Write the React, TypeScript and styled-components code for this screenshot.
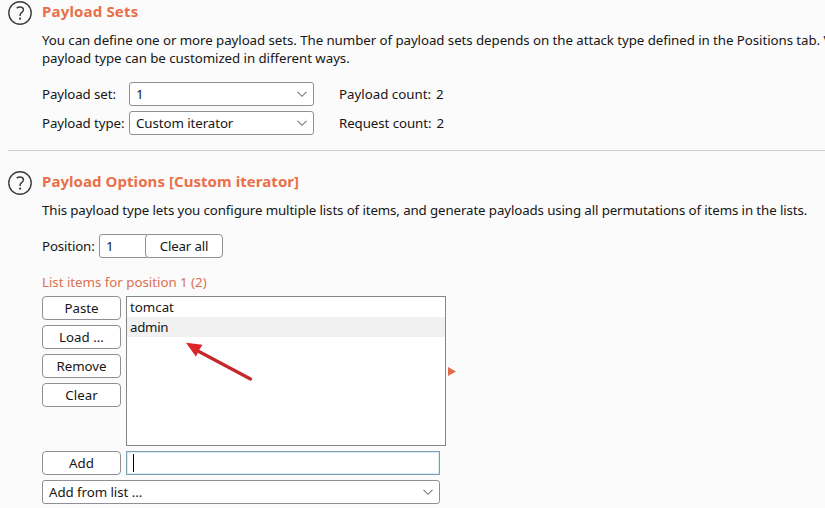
import React from "react";
import styled, { createGlobalStyle } from "styled-components";

const Global = createGlobalStyle`
  * { box-sizing: border-box; }
  html, body { margin: 0; padding: 0; background: #fbfbfb; overflow: hidden; }
  body { font-family: "Noto Sans", "Open Sans", sans-serif; font-size: 13.3px; color: #161616; }
`;

const Page = styled.main`
  width: 825px;
  height: 508px;
  overflow: hidden;
  background: #fbfbfb;
`;

const Section = styled.section<{ $top: number }>`
  display: grid;
  grid-template-columns: 24px 1fr;
  column-gap: 10px;
  padding: ${(p) => p.$top}px 0 0 8px;
`;

const Body = styled.div`
  display: flex;
  flex-direction: column;
  align-items: flex-start;
  min-width: 0;
`;

const Title = styled.h2<{ $spacing: number }>`
  margin: 0;
  height: 22px;
  line-height: 20px;
  font-size: 15px;
  font-weight: 700;
  letter-spacing: ${(p) => p.$spacing}px;
  color: #e8704a;
  white-space: nowrap;
`;

const Text = styled.span<{ $spacing?: number }>`
  letter-spacing: ${(p) => p.$spacing ?? 0}px;
  white-space: nowrap;
`;

const Paragraph = styled.p<{ $top: number }>`
  margin: ${(p) => p.$top}px 0 0;
  display: flex;
  flex-direction: column;
  line-height: 18px;
`;

const Form = styled.div`
  display: grid;
  grid-template-columns: 87px 185px auto;
  row-gap: 5px;
  margin-top: 15px;
  align-items: center;
`;

const Count = styled.div`
  padding-left: 25px;
  display: flex;
  gap: 5px;
`;

const Select = styled.div<{ $width: number }>`
  display: flex;
  align-items: center;
  justify-content: space-between;
  width: ${(p) => p.$width}px;
  height: 24px;
  padding: 0 5px 0 6px;
  border: 1px solid #8f8f96;
  border-radius: 3px;
  background: #fff;
`;

const Divider = styled.hr`
  margin: 15px 0 0 8px;
  border: 0;
  height: 1px;
  background: #cfcfcf;
`;

const PositionRow = styled.div`
  display: flex;
  align-items: center;
  margin-top: 15px;
`;

const PositionLabel = styled.div`
  width: 57px;
`;

const PositionValue = styled.div`
  display: flex;
  align-items: center;
  width: 50px;
  height: 24px;
  padding-left: 6px;
  border: 1px solid #8f8f96;
  border-radius: 3px;
  background: #fff;
`;

const Button = styled.button<{ $width: number; $overlap?: boolean }>`
  position: relative;
  display: flex;
  align-items: center;
  justify-content: center;
  width: ${(p) => p.$width}px;
  height: 24px;
  margin: 0 0 0 ${(p) => (p.$overlap ? -4 : 0)}px;
  padding: 0;
  border: 1px solid #8f8f96;
  border-radius: 4px;
  background: #fff;
  font: inherit;
  color: inherit;
`;

const ListCaption = styled.div`
  height: 20px;
  line-height: 20px;
  margin-top: 14px;
  color: #d9714f;
`;

const ListRow = styled.div`
  display: flex;
  margin-top: 4px;
`;

const ButtonColumn = styled.div`
  display: flex;
  flex-direction: column;
  gap: 5px;
  width: 84px;
`;

const ListBox = styled.div`
  width: 320px;
  height: 150px;
  border: 1px solid #86868a;
  background: #fff;
`;

const ListItem = styled.div<{ $selected?: boolean }>`
  height: 20px;
  line-height: 20px;
  padding-left: 3px;
  background: ${(p) => (p.$selected ? "#f1f1f1" : "transparent")};
`;

const Marker = styled.svg`
  display: block;
  margin: 71px 0 0 2px;
`;

const AddRow = styled.div`
  display: flex;
  gap: 5px;
  margin: 5px 0;
`;

const AddInput = styled.div`
  display: flex;
  align-items: center;
  width: 314px;
  height: 24px;
  padding-left: 6px;
  border: 1px solid #7f9fb0;
  box-shadow: inset 0 0 0 1px #dcebf1;
  background: #fff;
`;

const Caret = styled.span`
  width: 1px;
  height: 18px;
  background: #000;
`;

const Arrow = styled.svg`
  position: absolute;
  left: 180px;
  top: 336px;
`;

const HelpIcon = () => (
  <svg width="24" height="24" viewBox="0 0 24 24" fill="none" stroke="#3e3e3e">
    <circle cx="12" cy="12" r="11.2" strokeWidth="1.4" />
    <path d="M8.7 7.1C9.6 6.3 10.7 5.9 12 5.9C14.1 5.9 15.4 7 15.4 8.7C15.4 10.1 14.6 10.8 13.6 11.6C12.6 12.4 12.1 13 12.1 14.2V15" strokeWidth="1.5" />
    <circle cx="12.1" cy="17.7" r="1.1" fill="#3e3e3e" stroke="none" />
  </svg>
);

const Chevron = () => (
  <svg width="12" height="8" viewBox="0 0 12 8" fill="none" stroke="#77777b" strokeWidth="1.1">
    <path d="M1.5 1.9L6 6.3L10.5 1.9" />
  </svg>
);

const actions = ["Paste", "Load ...", "Remove", "Clear"];

export default function App() {
  return (
    <Page>
      <Global />
      <Section $top={1}>
        <HelpIcon />
        <Body>
          <Title $spacing={0.17}>Payload Sets</Title>
          <Paragraph $top={8}>
            <Text $spacing={-0.066}>You can define one or more payload sets. The number of payload sets depends on the attack type defined in the Positions tab. Various</Text>
            <Text $spacing={-0.06}>payload type can be customized in different ways.</Text>
          </Paragraph>
          <Form>
            <Text $spacing={-0.1}>Payload set:</Text>
            <Select $width={185}><Text>1</Text><Chevron /></Select>
            <Count><Text>Payload count:</Text><Text>2</Text></Count>
            <Text $spacing={-0.1}>Payload type:</Text>
            <Select $width={185}><Text $spacing={-0.08}>Custom iterator</Text><Chevron /></Select>
            <Count><Text $spacing={-0.08}>Request count:</Text><Text>2</Text></Count>
          </Form>
        </Body>
      </Section>
      <Divider />
      <Section $top={20}>
        <HelpIcon />
        <Body>
          <Title $spacing={0.06}>Payload Options [Custom iterator]</Title>
          <Paragraph $top={8}>
            <Text $spacing={-0.114}>This payload type lets you configure multiple lists of items, and generate payloads using all permutations of items in the lists.</Text>
          </Paragraph>
          <PositionRow>
            <PositionLabel><Text $spacing={-0.15}>Position:</Text></PositionLabel>
            <PositionValue>1</PositionValue>
            <Button $width={78} $overlap><Text $spacing={-0.15}>Clear all</Text></Button>
          </PositionRow>
          <ListCaption><Text $spacing={-0.02}>List items for position 1 (2)</Text></ListCaption>
          <ListRow>
            <ButtonColumn>
              {actions.map((label) => (
                <Button key={label} $width={79}><Text>{label}</Text></Button>
              ))}
            </ButtonColumn>
            <ListBox>
              <ListItem><Text>tomcat</Text></ListItem>
              <ListItem $selected><Text $spacing={-0.3}>admin</Text></ListItem>
            </ListBox>
            <Marker width="8" height="9" viewBox="0 0 8 9"><path d="M0 0V9L8 4.5Z" fill="#e06a4c" /></Marker>
          </ListRow>
          <AddRow>
            <Button $width={79}><Text>Add</Text></Button>
            <AddInput><Caret /></AddInput>
          </AddRow>
          <Select $width={398}><Text $spacing={-0.06}>Add from list ...</Text><Chevron /></Select>
        </Body>
      </Section>
      <Arrow width="80" height="50" viewBox="0 0 80 50">
        <path d="M17 14.5L70.5 43" stroke="#c4282c" strokeWidth="3.2" strokeLinecap="round" />
        <path d="M6 6.7L22.5 8.7L18.8 14.5L16 20.8Z" fill="#dc2429" />
      </Arrow>
    </Page>
  );
}
